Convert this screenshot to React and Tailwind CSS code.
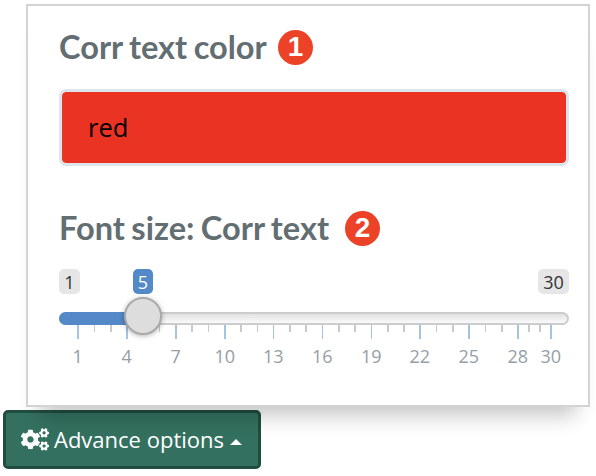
import React from "react";
import { FaCogs } from "react-icons/fa";

const majors = [
  { v: 1, x: 77, w: 2 }, { v: 4, x: 126, w: 2 }, { v: 7, x: 175, w: 2 },
  { v: 10, x: 224, w: 2 }, { v: 13, x: 273, w: 1 }, { v: 16, x: 322, w: 1 },
  { v: 19, x: 371, w: 1 }, { v: 22, x: 419, w: 2 }, { v: 25, x: 468, w: 2 },
  { v: 28, x: 517, w: 2 }, { v: 30, x: 550, w: 2 },
];

const minors = [
  [94, 1], [110, 2], [143, 1], [159, 1], [191, 2], [208, 1], [240, 2], [257, 1],
  [289, 2], [305, 2], [338, 2], [354, 2], [387, 2], [403, 2], [436, 1], [452, 2],
  [485, 1], [501, 2], [528, 2], [539, 2],
];

function Heading({ children, number, width }) {
  return (
    <div className="flex h-9 items-center">
      <h2 className={`whitespace-nowrap font-['Lato',sans-serif] text-[32.6px] font-bold leading-[34px] text-[#636e72] [word-spacing:-1.5px] ${width}`}>
        {children}
      </h2>
      <span className="flex size-[35px] shrink-0 items-center justify-center rounded-full bg-[#ec4228] font-['Liberation_Sans',sans-serif] text-[28px] font-bold leading-none text-white">
        {number}
      </span>
    </div>
  );
}

function Slider() {
  return (
    <div className="mt-[23px] w-[510px] font-['Open_Sans',sans-serif]">
      <div className="flex h-[25px] text-[18px] font-medium leading-[26px]">
        <span className="w-[21px] rounded-[5px] bg-[#e6e6e6] text-center text-[#333]">1</span>
        <span className="ml-[53px] w-5 rounded-[5px] bg-[#5389c6] text-center text-white">5</span>
        <span className="ml-auto w-[31px] rounded-[5px] bg-[#e6e6e6] text-center text-[#333]">30</span>
      </div>
      <div className="relative mt-[18px] h-[13px] rounded-full border-2 border-[#ccc] bg-linear-to-b from-[#e2e2e2] to-[#fafafa]">
        <div className="absolute -left-0.5 -top-0.5 h-[13px] w-[84px] rounded-l-full bg-[#5389c6]" />
        <div className="absolute left-[63px] top-[-17px] z-10 size-[38px] rounded-full border-2 border-[#aaa] bg-[#ddd] shadow-[0_1px_5px_rgba(0,0,0,0.3)]" />
      </div>
      <svg width="510" height="44" viewBox="59 325 510 44" className="block" shapeRendering="crispEdges">
        {minors.map(([x, w]) => (
          <rect key={x} x={x} y="325" width={w} height="7" fill="#c9c9c9" />
        ))}
        {majors.map(({ v, x, w }) => (
          <g key={v}>
            <rect x={x} y="325" width={w} height="14" fill="#a6c2e2" />
            <text x={x + w / 2 - 0.3} y="363" textAnchor="middle" fontSize="18" fontWeight="500" fill="#95a0a6">{v}</text>
          </g>
        ))}
      </svg>
    </div>
  );
}

export default function App() {
  return (
    <main className="h-[476px] w-[596px] overflow-hidden bg-white pt-1">
      <section className="relative z-10 ml-[26px] h-[403px] w-[564px] border-2 border-[#d3d3d3] bg-white pl-[31px] pt-[23px] shadow-[0_22px_20px_-14px_rgba(0,0,0,0.24)]">
        <Heading number="1" width="w-[219px]">Corr text color</Heading>
        <div className="mt-6 flex h-[77px] w-[510px] items-center rounded-[7px] border-[3px] border-[#dce4ec] bg-[#ea3323] bg-clip-padding pl-[26px] font-['Open_Sans',sans-serif] text-[25.5px] font-medium text-black">
          red
        </div>
        <div className="mt-11">
          <Heading number="2" width="w-[286px]">Font size: Corr text</Heading>
        </div>
        <Slider />
      </section>
      <button className="ml-[3px] mt-[3px] flex h-[59px] w-[258px] items-center rounded-[5px] border-[3px] border-[#204d40] bg-[#34705f] pl-[15px] font-['Open_Sans',sans-serif] text-[22px] font-medium text-white">
        <FaCogs className="h-[23px] w-[28px]" />
        <span className="ml-[5px] whitespace-nowrap">Advance options</span>
        <span className="ml-[6px] mt-[5px] border-x-[6px] border-b-[6px] border-x-transparent border-b-white" />
      </button>
    </main>
  );
}
